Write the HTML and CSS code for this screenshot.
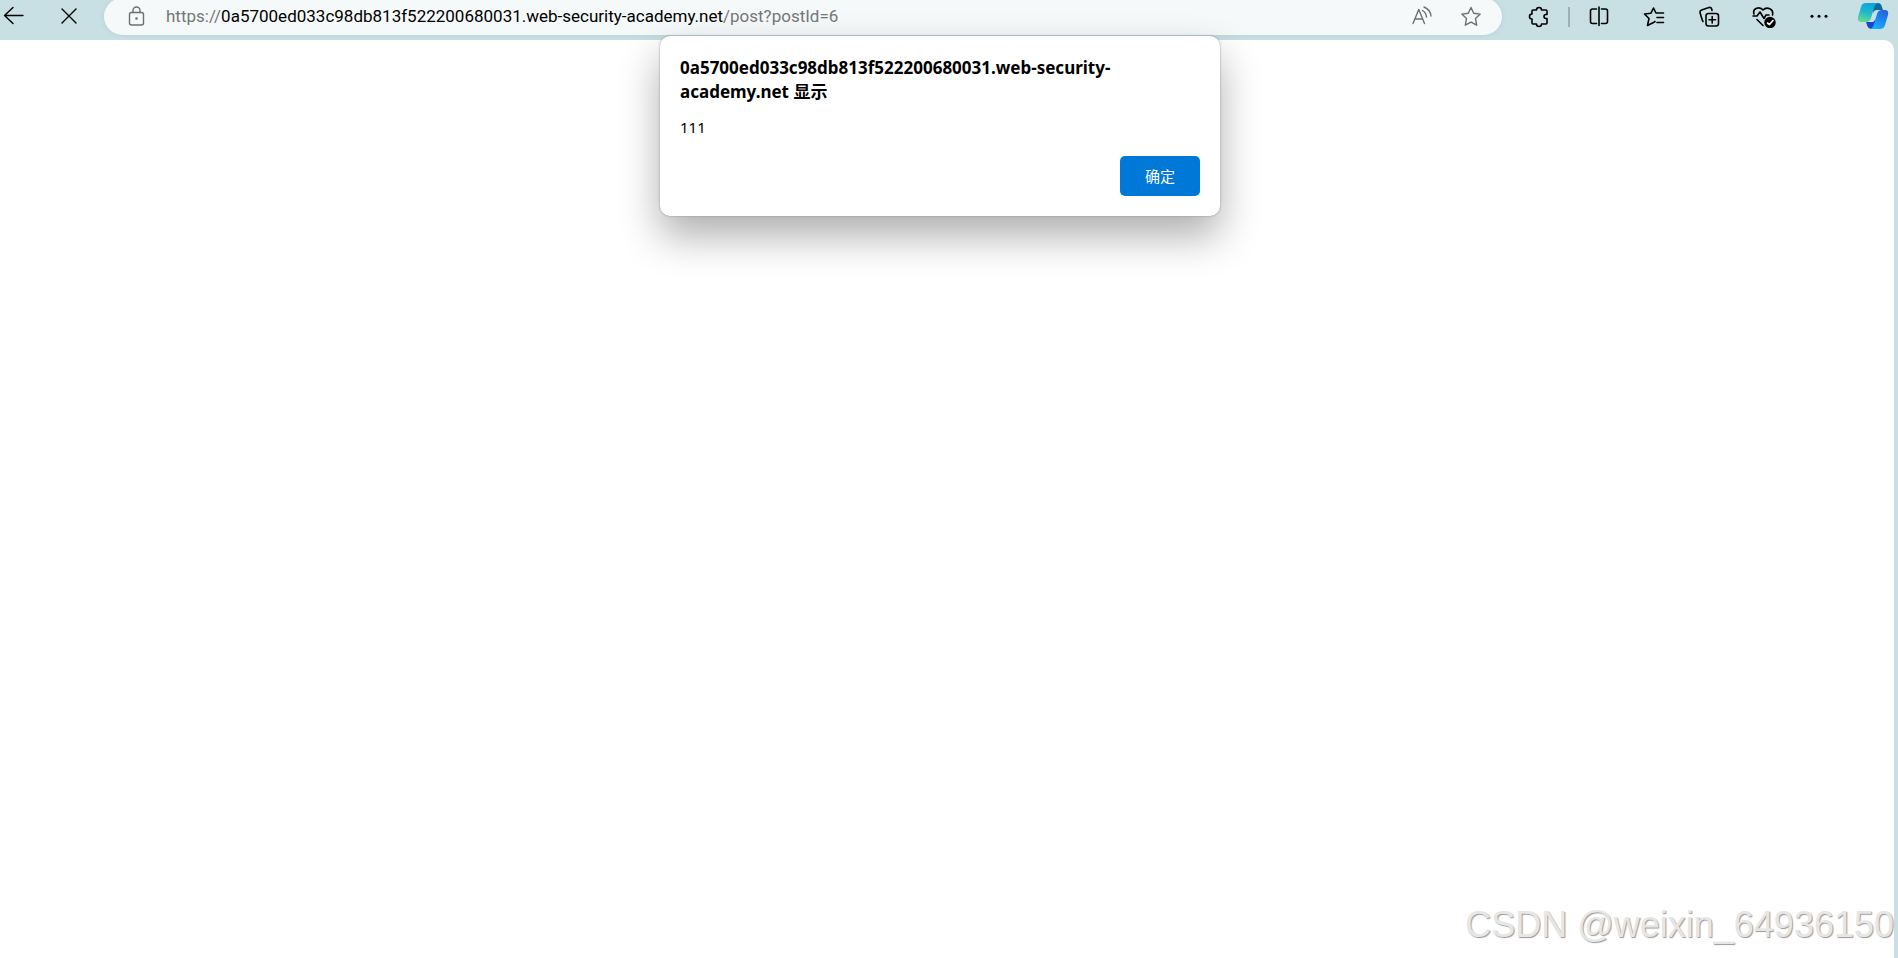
FILE: index.html
```html
<!DOCTYPE html>
<html lang="zh-CN">
<head>
<meta charset="utf-8">
<title>web-security-academy.net</title>
<link rel="stylesheet" href="styles.css">
</head>
<body>
<header class="toolbar">
  <nav class="nav">
    <button class="icon-btn" aria-label="返回"><svg class="icon" viewBox="0 0 24 24"><path d="M21 11.500H2.500M11 3.500L2.500 11.500L11 19.500"/></svg></button>
    <button class="icon-btn" aria-label="停止"><svg class="icon" viewBox="0 0 24 24"><path d="M5 5L19 19M19 5L5 19"/></svg></button>
  </nav>
  <div class="address">
    <button class="icon-btn muted" aria-label="网站信息"><svg class="icon" viewBox="0 0 24 24"><rect x="5.500" y="8.500" width="14" height="12.500" rx="2"/><path d="M9 8.500V6.500a3.500 3.500 0 0 1 7 0v2"/><circle class="solid" cx="12.500" cy="14.500" r="1.300"/></svg></button>
    <a class="url" href="#">https://<span class="host">0a5700ed033c98db813f522200680031.web-security-academy.net</span>/post?postId=6</a>
    <div class="address-actions">
      <button class="icon-btn muted" aria-label="大声朗读"><svg class="icon" viewBox="0 0 24 24"><path d="M3 19.500L8.800 5.500L14.500 19.500M5 15H12.500M12.500 6.500Q16 8.500 16.500 13M14 3Q20.500 6 21 12"/></svg></button>
      <button class="icon-btn muted" aria-label="收藏"><svg class="icon" viewBox="0 0 24 24"><path d="M12 3.500L14.700 9.300L21.200 10.100L16.500 14.600L17.700 21.200L12 18.200L6.300 21.200L7.500 14.600L2.800 10.100L9.300 9.300Z"/></svg></button>
    </div>
  </div>
  <div class="tools">
    <button class="icon-btn" aria-label="扩展"><svg class="icon dark" viewBox="0 0 24 24"><path d="M6 6h3.500a2.500 2.500 0 0 1 5 0H19a1 1 0 0 1 1 1v3.500h-1a2 2 0 0 0 0 4h1V19a1 1 0 0 1-1 1h-4.500a2.500 2.500 0 0 1-5 0H6a1 1 0 0 1-1-1v-4a2.400 2.400 0 0 1 0-5V7a1 1 0 0 1 1-1Z"/></svg></button>
    <span class="divider"></span>
    <button class="icon-btn" aria-label="分屏"><svg class="icon dark" viewBox="0 0 24 24"><path d="M9.500 5H5.500a2 2 0 0 0-2 2v10.500a2 2 0 0 0 2 2H9.500M14.500 5h4a2 2 0 0 1 2 2v10.500a2 2 0 0 1-2 2h-4M12 3v18.500"/></svg></button>
    <button class="icon-btn" aria-label="收藏夹"><svg class="icon dark" viewBox="0 0 24 24"><path d="M13 17.500L11.500 18.500L5.500 21.500L7 14.500L2.500 10L8.800 9.300L11.500 4L14 9H21.500M15 13.500h6.500M15 18.500h6.500"/></svg></button>
    <button class="icon-btn" aria-label="集锦"><svg class="icon dark" viewBox="0 0 24 24"><rect x="9" y="9.500" width="12.500" height="12.500" rx="2.500"/><path d="M15.200 12.500v6.500M12 15.700h6.500M6 17.500C5 16 4 12 3 8.500a2.300 2.300 0 0 1 1.500-2.500L12 3.500a2.300 2.300 0 0 1 2.700 1.500L15 6.500"/></svg></button>
    <button class="icon-btn" aria-label="浏览器概要"><svg class="icon dark" viewBox="0 0 24 24"><path d="M2 10C0 4 8 2 11 6C15 2 22 5 20.500 11M1 12H5L8 8L12 14.500L14 11H17M5 15.500L11 21.500"/><circle class="solid" cx="18" cy="18.500" r="5.700"/><path class="check" d="M15.500 19l2 1.500l3.500-4"/></svg></button>
    <button class="icon-btn" aria-label="设置及其他"><svg class="icon" viewBox="0 0 24 24"><g class="solid"><circle cx="5" cy="12.300" r="1.500"/><circle cx="12" cy="12.300" r="1.500"/><circle cx="19" cy="12.300" r="1.500"/></g></svg></button>
    <button class="icon-btn" aria-label="Copilot"><svg class="copilot" viewBox="0 0 32 28">
      <defs>
        <linearGradient id="leaf" x1="0.600" y1="0" x2="0.300" y2="1"><stop offset="0" stop-color="#0aa5df"/><stop offset=".5" stop-color="#22b7c9"/><stop offset="1" stop-color="#61dc92"/></linearGradient>
        <linearGradient id="wave" x1="0.800" y1="0" x2="0.300" y2="1"><stop offset="0" stop-color="#2463d8"/><stop offset=".5" stop-color="#1d86f0"/><stop offset="1" stop-color="#11b4f8"/></linearGradient>
      </defs>
      <path d="M14 1H20Q23 1 24 5L25 8H19Q16 8 15 11Z" fill="#126a9c"/>
      <path d="M8 20H15L18 17L17 27H14Q10 27 9 23Z" fill="#1b45cf"/>
      <path d="M8 1H20Q17 2 16 6L13 16Q12 20 8 20H3Q-1 20 0 15L3 5Q4 1 8 1Z" fill="url(#leaf)"/>
      <path d="M22 27H12Q15 26 16 22L19 12Q20 8 24 8H27Q31 8 30 13L27 23Q26 27 22 27Z" fill="url(#wave)"/>
    </svg></button>
  </div>
</header>
<main class="page">
  <p class="watermark">CSDN @weixin_64936150</p>
</main>
<div class="dialog" role="alertdialog" aria-labelledby="dialog-title" aria-describedby="dialog-message">
  <h1 class="dialog-title" id="dialog-title">0a5700ed033c98db813f522200680031.web-security-academy.net 显示</h1>
  <p class="dialog-message" id="dialog-message">111</p>
  <div class="dialog-actions"><button class="ok">确定</button></div>
</div>
</body>
</html>
```
FILE: styles.css
```css
* { box-sizing: border-box; }
body {
  margin: 0;
  min-height: 100vh;
  display: flex;
  flex-direction: column;
  overflow: hidden;
  background: #c8dfe3;
  font-family: "Noto Sans", "Noto Sans CJK SC", sans-serif;
  color: #000;
}
button { border: 0; padding: 0; background: none; font: inherit; color: inherit; }
.toolbar { display: flex; height: 40px; }
.nav { display: flex; gap: 31px; padding-left: 2px; width: 104px; }
.icon-btn { display: flex; align-items: center; justify-content: center; width: 24px; height: 32px; flex: none; }
.icon { width: 24px; height: 24px; fill: none; stroke: currentColor; stroke-width: 1.4; stroke-linecap: round; stroke-linejoin: round; }
.icon.dark { stroke-width: 1.6; }
.icon .solid { fill: currentColor; stroke: none; }
.icon .check { stroke: #fff; }
.muted { color: #6d7072; }
.address { flex: 1; display: flex; height: 37px; margin-top: -2px; padding: 2px 19px 0 20px; border-radius: 19px; background: #f5f9fa; box-shadow: 0 0 5px #b5d0d5; }
.url { margin-left: 18px; font-family: Roboto, sans-serif; font-size: 17px; line-height: 33px; color: #777; text-decoration: none; white-space: nowrap; }
.host { color: #000; }
.address-actions { display: flex; gap: 25px; margin-left: auto; }
.tools { display: flex; gap: 31px; padding: 0 12px 0 25px; }
.divider { width: 2px; height: 20px; margin: 7px -14px 0; background: #9eafb3; }
.copilot { width: 32px; height: 28px; flex: none; }
.page { flex: 1; display: flex; align-items: flex-end; justify-content: flex-end; margin-right: 4px; border-radius: 0 10px 0 0; background: #fff; }
.watermark { margin: 0 0 11px; font: 36px/44px "Liberation Sans", sans-serif; color: #e6e6e6; text-shadow: 1px 1px 1px #999; }
.dialog { position: absolute; top: 36px; left: 50%; width: 560px; margin-left: -289px; padding: 20px; border-radius: 10px; background: #fff; box-shadow: 0 0 2px #888, 0 20px 40px rgba(0, 0, 0, .32); }
.dialog-title { margin: 0 60px 12px 0; font-size: 17px; line-height: 24px; }
.dialog-message { margin: 0 0 18px; font-size: 15px; line-height: 22px; }
.dialog-actions { display: flex; justify-content: flex-end; }
.ok { width: 80px; height: 40px; padding-bottom: 2px; border-radius: 5px; background: #0078d7; color: #fff; font-size: 15px; }
```
